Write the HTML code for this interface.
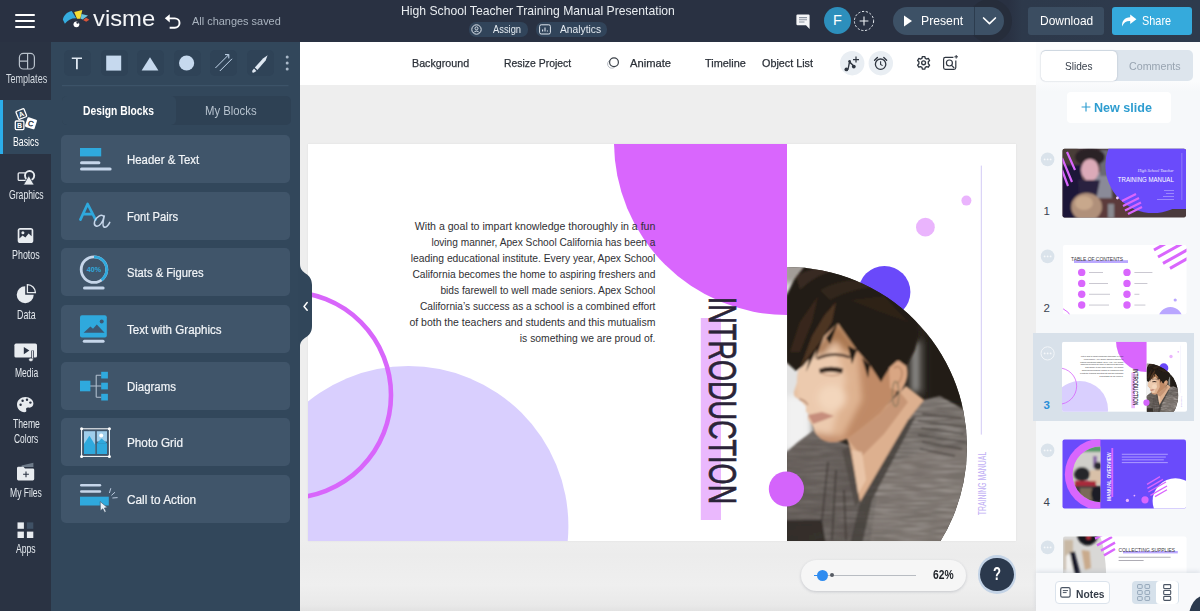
<!DOCTYPE html>
<html><head>
<meta charset="utf-8">
<title>Visme</title>
<style>
*{box-sizing:border-box;margin:0;padding:0}
html,body{width:1200px;height:611px;overflow:hidden;background:#eeeeee;font-family:"Liberation Sans",sans-serif;}
#app{position:relative;width:1200px;height:611px;overflow:hidden}
.a{position:absolute}
.x{position:absolute;white-space:nowrap;line-height:1;transform-origin:0 50%;display:inline-block}
.xr{position:absolute;white-space:nowrap;line-height:1;transform-origin:100% 50%;display:inline-block}
svg{position:absolute;overflow:visible}
/* top bar */
#top{position:absolute;left:0;top:0;width:1200px;height:41.5px;overflow:hidden;background:linear-gradient(90deg,#293142 0,#293142 1008px,#2d394b 1022px,#2e3b4d 1200px);color:#fff}
/* left icon rail */
#rail{position:absolute;left:0;top:41px;width:51px;height:570px;background:#2a3343}
#rail .x{color:#e4e9ee;font-size:13px}
/* panel */
#panel{position:absolute;left:51px;top:41px;width:249px;height:570px;background:#32475b}
.blk{position:absolute;left:9px;width:229px;height:48px;border-radius:5px;background:#40556a}
.blk .x{left:65.8px;top:19.2px;color:#f2f5f8;font-size:12px;-webkit-text-stroke:.2px #f2f5f8}
.sb{position:absolute;top:8px;width:27px;height:26px;border-radius:5px;background:#2f4357}
/* toolbar */
#tb{position:absolute;left:300px;top:41px;width:735.5px;height:44px;background:#fff;color:#2f3640}
#tb .x{top:15px;font-size:11px;color:#2b3038;-webkit-text-stroke:.25px #2b3038}
/* canvas */
#cv{position:absolute;left:300px;top:85px;width:735.5px;height:526px;background:linear-gradient(180deg,#eeeeee 0,#eeeeee 455px,#ececec 470px,#efefef 500px,#e9e9e9 520px,#e2e2e2 526px)}
#slide{position:absolute;left:308px;top:144px;width:708px;height:397px;background:#fff;overflow:hidden;box-shadow:0 0 2px rgba(0,0,0,.07)}
/* right */
#right{position:absolute;left:1035.5px;top:41px;width:164.5px;height:570px;background:linear-gradient(180deg,#fbfcfd 0,#fbfcfd 40px,#f6f8fa 50px,#f6f8fa 100%)}
</style>
</head>
<body>
<div id="app">
  <div id="cv"></div>
  <div id="slide"><svg style="left:0;top:0" width="708" height="397" viewBox="308 144 708 397">
<defs>
  <clipPath id="cpPhoto"><path d="M787 267 A180 180 0 0 1 787 627 Z"></path></clipPath>
  <clipPath id="cpFace"><path d="M798 371 L797 383 L794 392 Q793 397 799 399 L803 403 L806 406 L806 411 L809 414 L808 419 L813 426 Q815 437 826 441 Q838 444 850 437 L880 414 L896 394 L900 378 L890 368 L881 381 L870 365 L857 350 L838 323 L824 336 L816 350 L803 366 Z"></path></clipPath>
  <clipPath id="cpShirt"><path d="M780 458 L798 442 L813 431 L850 446 L860 502 L908 420 L924 400 L940 396 L972 414 V545 H780 Z"></path></clipPath>
  <filter id="heatherD" x="0" y="0" width="100%" height="100%"><feTurbulence type="fractalNoise" baseFrequency="0.035 0.55" numOctaves="2" seed="4"></feTurbulence><feColorMatrix type="matrix" values="0 0 0 0 0.18  0 0 0 0 0.16  0 0 0 0 0.14  1.6 0 0 0 -0.62"></feColorMatrix></filter>
  <filter id="heatherL" x="0" y="0" width="100%" height="100%"><feTurbulence type="fractalNoise" baseFrequency="0.03 0.5" numOctaves="2" seed="11"></feTurbulence><feColorMatrix type="matrix" values="0 0 0 0 0.66  0 0 0 0 0.62  0 0 0 0 0.59  1.4 0 0 0 -0.6"></feColorMatrix></filter>
  <clipPath id="cpPink"><rect x="308" y="144" width="479" height="397"></rect></clipPath>
  <filter id="bl1" x="-10%" y="-10%" width="120%" height="120%"><feGaussianBlur stdDeviation="1.3"></feGaussianBlur></filter>
  <filter id="bl3" x="-20%" y="-20%" width="140%" height="140%"><feGaussianBlur stdDeviation="3"></feGaussianBlur></filter>
  <linearGradient id="gSkin" x1="0" y1="0" x2="1" y2="0"><stop offset="0" stop-color="#e9c3a4"></stop><stop offset=".55" stop-color="#dcae8c"></stop><stop offset="1" stop-color="#c99572"></stop></linearGradient>
  <linearGradient id="gShirt" x1="0" y1="0" x2="1" y2="1"><stop offset="0" stop-color="#7a726d"></stop><stop offset=".6" stop-color="#6a6460"></stop><stop offset="1" stop-color="#5c5652"></stop></linearGradient>
  <g id="slideArt">
    <rect x="308" y="144" width="708" height="397" fill="#fff"></rect>
    <!-- lavender circle -->
    <circle cx="408.4" cy="526" r="160" fill="#d9cffe"></circle>
    <!-- pink ring -->
    <circle cx="288" cy="395" r="103" fill="none" stroke="#d866fb" stroke-width="4.6"></circle>
    <!-- big pink quarter -->
    <g clip-path="url(#cpPink)"><circle cx="787" cy="142" r="173" fill="#d966fd"></circle></g>
    <!-- small circles -->
    <circle cx="925.4" cy="227.2" r="9.4" fill="#eab4fd"></circle>
    <circle cx="966.4" cy="200.6" r="5" fill="#eab4fd"></circle>
    <circle cx="884.4" cy="292" r="26" fill="#6a49fa"></circle>
    <!-- line + vertical caption -->
    <rect x="980.8" y="165.6" width="1" height="269" fill="#d3caf6"></rect>
    <text transform="translate(985.6 515.2) rotate(-90)" font-family="Liberation Sans" font-size="10" fill="#bfaff4" textLength="63.4" lengthAdjust="spacingAndGlyphs">TRAINING MANUAL</text>
    <!-- intro -->
    <rect x="700.8" y="318" width="20.2" height="202" fill="#eab8fd"></rect>
    <text transform="translate(709.4 296.8) rotate(90)" font-family="Liberation Sans" font-size="39.6" fill="#2a2438" stroke="#2a2438" stroke-width="0.7" textLength="207.4" lengthAdjust="spacingAndGlyphs">INTRODUCTION</text>
    <!-- photo -->
    <g clip-path="url(#cpPhoto)">
      <rect x="787" y="260" width="185" height="285" fill="#2a251f"></rect>
      <g filter="url(#bl3)">
        <rect x="778" y="255" width="36" height="205" fill="#e2e2e2"></rect>
        <rect x="782" y="258" width="24" height="26" fill="#a39d98"></rect>
        <rect x="784" y="300" width="10" height="55" fill="#8f8c8a"></rect>
        <rect x="785" y="396" width="24" height="56" fill="#f1f1f1"></rect>
        <rect x="783" y="452" width="8" height="12" fill="#3a3430"></rect>
        <rect x="911" y="342" width="9" height="50" fill="#8e8d8a"></rect>
        <rect x="926" y="325" width="46" height="80" fill="#231e18"></rect>
      </g>
      <g filter="url(#bl1)">
        <!-- shirt -->
        <path d="M780 458 L798 442 L813 431 L850 446 L860 502 L908 420 L924 400 L940 396 L972 414 V545 H780 Z" fill="url(#gShirt)"></path>
        <path d="M880 470 Q930 440 972 450 V545 H870 Z" fill="#857c76" opacity=".55"></path>
        <g clip-path="url(#cpShirt)"><rect x="787" y="396" width="185" height="146" filter="url(#heatherL)"></rect><rect x="787" y="396" width="185" height="146" filter="url(#heatherD)"></rect></g>
        <path d="M780 458 L798 442 L813 431 L850 446 L860 502 L852 545 H780 Z" fill="#46403c" opacity=".38"></path>
        <path d="M780 520 H822 L826 545 H780 Z" fill="#2c2622" opacity=".85"></path>
        <path d="M860 502 L908 420 L916 416 L872 500 L862 545 H850 Z" fill="#3f3935" opacity=".75"></path>
        <path d="M850 446 L860 502 L855 506 L842 450 Z" fill="#4d4742" opacity=".7"></path>
        <g stroke="#39332f" stroke-width="1.7" opacity=".7" fill="none">
          <path d="M922 414 L962 418 M918 421 L966 427 M921 428 L964 434 M918 435 L966 442 M922 442 L962 449 M920 449 L955 456"></path>
          <path d="M836 470 L832 540 M828 462 L822 520 M844 490 L846 540"></path>
        </g>
        
        <!-- neck -->
        <path d="M846 436 L850 447 L860 502 L908 420 L924 400 L906 386 L880 412 Z" fill="#ddb08f"></path>
        <path d="M846 438 L878 416 L900 392 L908 402 L884 434 L862 456 Z" fill="#bb8868" opacity=".65"></path>
        <path d="M852 450 L858 494 L866 480 L862 452 Z" fill="#ecc9ad" opacity=".8"></path>
        <!-- face -->
        <path d="M798 371 L797 383 L794 392 Q793 397 799 399 L803 403 L806 406 L806 411 L809 414 L808 419 L813 426 Q815 437 826 441 Q838 444 850 437 L880 414 L896 394 L900 378 L890 368 L881 381 L870 365 L857 350 L838 323 L824 336 L816 350 L803 366 Z" fill="#dfb391"></path>
        <g clip-path="url(#cpFace)"><g filter="url(#bl3)">
          <path d="M790 360 L830 330 L846 380 L830 440 L800 430 Z" fill="#eccaae"></path>
          <ellipse cx="832" cy="398" rx="14" ry="13" fill="#f3d6bc"></ellipse>
          <path d="M858 350 L905 372 L900 400 L852 445 L838 446 L862 400 Z" fill="#c08a66"></path>
          <path d="M812 352 L838 322 L860 352 L846 352 L836 340 L822 356 Z" fill="#a8764f"></path>
          <path d="M812 432 L850 438 L838 450 L816 446 Z" fill="#c4906e"></path>
        </g></g>
        <path d="M808 415 L822 412 L834 416 L824 420 L813 424 Z" fill="#bf8272" opacity=".85"></path>
        <path d="M819 369 Q830 364.5 843 368.6 L842 373.4 Q830 370 820 373.4 Z" fill="#2e211a" opacity=".95"></path>
        <path d="M822 374 Q831 377 840 374.4" stroke="#b88468" stroke-width="1.2" fill="none" opacity=".8"></path>
        <path d="M817 358.6 Q834 351 850 357.4" stroke="#4a3528" stroke-width="2.8" fill="none" opacity=".8"></path>
        <path d="M799 399 Q805 400 808 405" stroke="#a87860" stroke-width="1.4" fill="none" opacity=".8"></path>
        <!-- ear -->
        <path d="M889 366 Q898 356 906 364 Q911 378 900 392 L890 388 Z" fill="#d9a683"></path>
        <path d="M894 368 Q900 364 902 372 Q902 380 897 384" stroke="#b07e5e" stroke-width="1.2" fill="none"></path>
        <ellipse cx="895.6" cy="394" rx="3.2" ry="12.6" fill="none" stroke="#8d7a5e" stroke-width="1.1"></ellipse>
        <!-- hair -->
        <path d="M786 362 L786 296 L794 280 L806 264 L830 258 L905 262 L914 300 L919 334 L915 350 L906 366 L898 360 L889 368 L881 382 L870 365 L857 350 L838 323 L824 336 L816 351 L803 366 L796 371 Z" fill="#231a12"></path>
        <path d="M838 323 L830 344 L826 338 Z M857 350 L852 364 L848 346 Z M870 365 L868 378 L862 358 Z M816 351 L806 372 L810 356 Z M824 336 L815 360 L818 344 Z" fill="#231a12"></path>
        <path d="M800 368 L812 336 L824 316 L836 302 L832 322 L820 342 Z" fill="#6a4830" opacity=".6"></path>
        <path d="M790 352 L800 322 L818 296 L812 322 L800 352 Z" fill="#46321f" opacity=".6"></path>
        <path d="M820 290 Q850 272 890 288 Q860 284 830 300 Z" fill="#3c2d20" opacity=".6"></path>
        <path d="M850 300 L884 296 L908 322 L880 312 Z" fill="#35281d" opacity=".6"></path>
        <path d="M796 276 Q820 262 850 268 Q820 270 800 290 Z" fill="#4a3c30" opacity=".55"></path>
      </g>
    </g>
    <!-- pink small circle -->
    <circle cx="786.4" cy="489" r="17.6" fill="#d464fb"></circle>
    <!-- body text -->
    <g font-family="Liberation Sans" font-size="10.6" fill="#303034" text-anchor="end">
      <text x="655.4" y="230" textLength="240.6" lengthAdjust="spacingAndGlyphs">With a goal to impart knowledge thoroughly in a fun</text>
      <text x="655.4" y="246" textLength="224" lengthAdjust="spacingAndGlyphs">loving manner, Apex School California has been a</text>
      <text x="655.4" y="262" textLength="244.6" lengthAdjust="spacingAndGlyphs">leading educational institute. Every year, Apex School</text>
      <text x="655.4" y="278" textLength="243" lengthAdjust="spacingAndGlyphs">California becomes the home to aspiring freshers and</text>
      <text x="655.4" y="294" textLength="215" lengthAdjust="spacingAndGlyphs">bids farewell to well made seniors. Apex School</text>
      <text x="655.4" y="310" textLength="235.4" lengthAdjust="spacingAndGlyphs">California’s success as a school is a combined effort</text>
      <text x="655.4" y="326" textLength="246" lengthAdjust="spacingAndGlyphs">of both the teachers and students and this mutualism</text>
      <text x="655.4" y="342" textLength="135.6" lengthAdjust="spacingAndGlyphs">is something we are proud of.</text>
    </g>
  </g>
</defs>
<use href="#slideArt"></use>
</svg>
</div>
  <div id="tb"><div class="a" style="left:-300px;top:-41px;width:1200px;height:100px">
<span class="x" style="left: 412.2px; top: 57.6px; transform: scaleX(0.9729);">Background</span>
<span class="x" style="left: 503.8px; top: 57.6px; transform: scaleX(0.9465);">Resize Project</span>
<span class="x" style="left: 629.8px; top: 57.6px; transform: scaleX(1.015);">Animate</span>
<span class="x" style="left: 704.8px; top: 57.6px; transform: scaleX(0.9902);">Timeline</span>
<span class="x" style="left: 762.4px; top: 57.6px; transform: scaleX(0.9808);">Object List</span>
<svg style="left:0;top:0" width="1200" height="100" viewBox="0 0 1200 100">
  <!-- animate icon -->
  <circle cx="611.8" cy="64" r="4.2" fill="none" stroke="#b7bcc4" stroke-width="1"></circle>
  <circle cx="614" cy="62.2" r="4.4" fill="#fff" stroke="#3a4048" stroke-width="1.2"></circle>
  <!-- music -->
  <circle cx="852.2" cy="63.2" r="12.2" fill="#e9eef3"></circle>
  <g fill="#2f3640" stroke="none">
    <circle cx="846.4" cy="69.4" r="1.9"></circle>
    <circle cx="853.8" cy="66.6" r="1.9"></circle>
    <circle cx="849.6" cy="61.2" r="1.3"></circle>
    <path d="M847.4 69.4 L848.9 61 L850.3 61.4 L852.2 63.4 L854.9 66.2 L853.8 67.2 L851.2 64.6 L849.9 63.4 L848.6 69.8 Z"></path>
    <path d="M855.4 56.6 H856.6 V59 H859 V60.2 H856.6 V62.6 H855.4 V60.2 H853 V59 H855.4 Z"></path>
  </g>
  <!-- alarm -->
  <circle cx="880.8" cy="63.2" r="12.2" fill="#e9eef3"></circle>
  <circle cx="880.6" cy="64.2" r="5.2" fill="none" stroke="#2f3640" stroke-width="1.3"></circle>
  <path d="M880.6 61.2 V64.4 L882.6 65.6" fill="none" stroke="#2f3640" stroke-width="1.1"></path>
  <path d="M874.6 60.2 L877.4 57.6 M886.6 60.2 L883.8 57.6" stroke="#2f3640" stroke-width="1.4" stroke-linecap="round"></path>
  <!-- gear -->
  <g transform="translate(923.6 62.8) scale(.92)">
    <path d="M-1.3 -6.8 H1.3 L1.8 -4.9 L3.3 -4.1 L5.1 -4.8 L6.5 -2.5 L5.1 -1.1 V1.1 L6.5 2.5 L5.1 4.8 L3.3 4.1 L1.8 4.9 L1.3 6.8 H-1.3 L-1.8 4.9 L-3.3 4.1 L-5.1 4.8 L-6.5 2.5 L-5.1 1.1 V-1.1 L-6.5 -2.5 L-5.1 -4.8 L-3.3 -4.1 L-1.8 -4.9 Z" fill="none" stroke="#2f3640" stroke-width="1.45" stroke-linejoin="round"></path>
    <circle r="2.1" fill="none" stroke="#2f3640" stroke-width="1.45"></circle>
  </g>
  <!-- image search -->
  <g fill="none" stroke="#2f3640" stroke-width="1.2">
    <path d="M953.4 57.4 H945.4 Q943.6 57.4 943.6 59.2 V67.6 Q943.6 69.4 945.4 69.4 H954 Q955.8 69.4 955.8 67.6 V60.4"></path>
    <circle cx="949.4" cy="63" r="3"></circle>
    <path d="M951.6 65.4 L954.2 68"></path>
    <path d="M956.2 55 V58.6 M954.4 56.8 H958" stroke-width="1"></path>
  </g>
</svg>
</div>
</div>
  <div id="right"><div class="a" style="left:-1035.5px;top:-41px;width:1200px;height:611px">
<!-- tabs -->
<div class="a" style="left:1040.8px;top:50px;width:152.6px;height:31.4px;border-radius:5px;background:#dde5ed"></div>
<div class="a" style="left:1041.4px;top:50.6px;width:76px;height:30.2px;border-radius:4.5px;background:#fff;box-shadow:0 0 1.5px rgba(60,80,110,.45)"></div>
<span class="x" style="left: 1065.4px; top: 60px; font-size: 11.6px; color: rgb(54, 62, 74); transform: scaleX(0.8688);">Slides</span>
<span class="x" style="left: 1128.6px; top: 60px; font-size: 11.6px; color: rgb(152, 164, 177); transform: scaleX(0.9214);">Comments</span>
<!-- new slide -->
<div class="a" style="left:1066.5px;top:92.4px;width:104.5px;height:31px;border-radius:4px;background:#fff"></div>
<svg style="left:1081px;top:102.4px" width="10" height="10" viewBox="0 0 10 10"><path d="M5 .6V9.4M.6 5H9.4" stroke="#2e9dd0" stroke-width="1.15"></path></svg>
<span class="x" style="left: 1094.2px; top: 101.2px; font-size: 13px; font-weight: bold; color: rgb(46, 157, 208); transform: scaleX(0.9667);">New slide</span>
<!-- selection -->
<div class="a" style="left:1032.8px;top:333px;width:161.4px;height:88px;background:#d8e1ea"></div>
<!-- numbers -->
<span class="x" style="left:1043.6px;top:206.4px;font-size:11.5px;color:#3a4350">1</span>
<span class="x" style="left:1043.6px;top:303.4px;font-size:11.5px;color:#3a4350">2</span>
<span class="x" style="left:1043.4px;top:399.8px;font-size:11.5px;color:#2b8fd8;font-weight:bold">3</span>
<span class="x" style="left:1043.6px;top:497.4px;font-size:11.5px;color:#3a4350">4</span>
<svg style="left:0;top:0" width="1200" height="611" viewBox="0 0 1200 611">
<defs>
  <clipPath id="t1"><rect x="1062.5" y="148.8" width="123.5" height="68.8" rx="2"></rect></clipPath>
  <clipPath id="t2"><rect x="1063" y="245" width="123.5" height="69.2" rx="2"></rect></clipPath>
  <clipPath id="t3"><rect x="1062" y="341.8" width="125" height="70" rx="2"></rect></clipPath>
  <clipPath id="t4"><rect x="1062.5" y="439.4" width="123.5" height="69" rx="2"></rect></clipPath>
  <clipPath id="t5"><rect x="1063" y="536.4" width="123.5" height="69" rx="2"></rect></clipPath>
  <clipPath id="t4in"><circle cx="1100.4" cy="474.4" r="27.8"></circle></clipPath>
  <clipPath id="t4h"><rect x="1060" y="436" width="40.4" height="76"></rect></clipPath>
  <filter id="tb1" x="-20%" y="-20%" width="140%" height="140%"><feGaussianBlur stdDeviation="1.1"></feGaussianBlur></filter>
</defs>
<!-- more buttons -->
<g>
  <circle cx="1047.6" cy="159.4" r="6.8" fill="#dae3eb"></circle><circle cx="1047.6" cy="256.4" r="6.8" fill="#dae3eb"></circle>
  <circle cx="1047.6" cy="353.4" r="6.6" fill="none" stroke="#f3f6f9" stroke-width="1"></circle>
  <circle cx="1047.6" cy="450.4" r="6.8" fill="#dae3eb"></circle><circle cx="1047.6" cy="547.4" r="6.8" fill="#dae3eb"></circle>
  <g fill="#f6f8fa">
    <circle cx="1044.6" cy="159.4" r=".9"></circle><circle cx="1047.6" cy="159.4" r=".9"></circle><circle cx="1050.6" cy="159.4" r=".9"></circle>
    <circle cx="1044.6" cy="256.4" r=".9"></circle><circle cx="1047.6" cy="256.4" r=".9"></circle><circle cx="1050.6" cy="256.4" r=".9"></circle>
    <circle cx="1044.6" cy="353.4" r=".9"></circle><circle cx="1047.6" cy="353.4" r=".9"></circle><circle cx="1050.6" cy="353.4" r=".9"></circle>
    <circle cx="1044.6" cy="450.4" r=".9"></circle><circle cx="1047.6" cy="450.4" r=".9"></circle><circle cx="1050.6" cy="450.4" r=".9"></circle>
    <circle cx="1044.6" cy="547.4" r=".9"></circle><circle cx="1047.6" cy="547.4" r=".9"></circle><circle cx="1050.6" cy="547.4" r=".9"></circle>
  </g>
</g>
<!-- thumb 1 -->
<g clip-path="url(#t1)">
  <rect x="1062" y="148" width="125" height="71" fill="#4a3a3c"></rect>
  <g filter="url(#tb1)">
    <rect x="1062" y="148" width="16" height="20" fill="#4a3c38"></rect>
    <rect x="1062" y="165" width="20" height="54" fill="#1b1538"></rect>
    <rect x="1088" y="172" width="24" height="30" fill="#8a8a98"></rect>
    <rect x="1100" y="150" width="12" height="26" fill="#6a6a72"></rect>
    <path d="M1098 198 H1130 V219 H1096 Z" fill="#5c3a3a"></path>
    <ellipse cx="1090" cy="157" rx="15" ry="9" fill="#2c2228"></ellipse>
    <ellipse cx="1090" cy="170" rx="9" ry="11" fill="#dcaab8"></ellipse>
    <path d="M1078 180 L1100 180 L1096 200 L1080 204 Z" fill="#2a2040"></path>
    <ellipse cx="1086.6" cy="207" rx="15.4" ry="14" fill="#b0907a"></ellipse>
    <ellipse cx="1084" cy="203" rx="9" ry="7" fill="#c8a88c"></ellipse>
    <rect x="1108" y="204" width="6" height="14" fill="#8a8a90"></rect>
  </g>
  <circle cx="1153" cy="165.4" r="47.6" fill="#6a4bfb"></circle>
  <rect x="1160" y="190" width="30" height="19" fill="#6a4bfb"></rect>
  <g stroke="#d966fd" stroke-width="2.2">
    <path d="M1062 158 L1072 182 M1062 170 L1068 186 M1067 152 L1075 170"></path>
    <path d="M1122 201 L1136 194 M1123 206 L1139 198 M1125 210.4 L1141 202.4 M1128 214 L1142 207"></path>
  </g>
  <circle cx="1117.4" cy="198" r="1.4" fill="#f0c8ff"></circle>
  <text x="1117.8" y="181.8" font-family="Liberation Sans" font-size="6.6" fill="#fff" textLength="56" lengthAdjust="spacingAndGlyphs">TRAINING MANUAL</text>
  <text x="1137.8" y="172" font-family="Liberation Serif" font-style="italic" font-size="4.6" fill="#efeaff" textLength="36" lengthAdjust="spacingAndGlyphs">High School Teacher</text>
  <g fill="#b9aaff" opacity=".8"><rect x="1164" y="190.2" width="10" height=".8"></rect><rect x="1166" y="193.2" width="8" height=".8"></rect><rect x="1163" y="196.2" width="11" height=".8"></rect><rect x="1157" y="199.2" width="17" height=".8"></rect></g>
  <rect x="1181.6" y="153" width=".6" height="47" fill="#a896ff"></rect>
</g>
<!-- thumb 2 -->
<g clip-path="url(#t2)">
  <rect x="1062" y="244" width="126" height="72" fill="#fff"></rect>
  <rect x="1074" y="260.2" width="54" height="2.8" fill="#bba8ff"></rect>
  <text x="1071" y="261.4" font-family="Liberation Sans" font-size="5.8" fill="#3c3a44" textLength="52" lengthAdjust="spacingAndGlyphs">TABLE OF CONTENTS</text>
  <g stroke="#d966fd" stroke-width="3">
    <path d="M1154 250 L1172 240 M1158 257 L1186 241.4 M1163 263.4 L1190 248.4 M1170 268.4 L1192 256"></path>
  </g>
  <g fill="#d966fd">
    <circle cx="1081.7" cy="272.4" r="3.7"></circle><circle cx="1081.7" cy="283.4" r="3.7"></circle><circle cx="1081.7" cy="294.2" r="3.7"></circle><circle cx="1081.7" cy="305" r="3.7"></circle>
    <circle cx="1127" cy="272.4" r="3.7"></circle><circle cx="1127" cy="283.4" r="3.7"></circle><circle cx="1127" cy="294.2" r="3.7"></circle><circle cx="1127" cy="305" r="3.7"></circle>
  </g>
  <g fill="#c4c2cc">
    <rect x="1089" y="272" width="14" height=".9"></rect><rect x="1089" y="283" width="19" height=".9"></rect><rect x="1089" y="293.8" width="21" height=".9"></rect><rect x="1089" y="304.6" width="20" height=".9"></rect>
    <rect x="1134.4" y="272" width="18" height=".9"></rect><rect x="1134.4" y="283" width="13" height=".9"></rect><rect x="1134.4" y="293.8" width="5" height=".9"></rect><rect x="1134.4" y="304.6" width="11" height=".9"></rect>
  </g>
  <circle cx="1170.4" cy="319" r="12" fill="#b9a6ff"></circle>
  <circle cx="1175.2" cy="300" r="1.6" fill="#b9a6ff"></circle>
  <circle cx="1058" cy="322" r="14" fill="none" stroke="#d966fd" stroke-width="1"></circle>
</g>
<!-- thumb 3 = slide -->
<g clip-path="url(#t3)"><g transform="translate(1062 341.8) scale(.17655) translate(-308 -144)"><use href="#slideArt"></use></g></g>
<!-- thumb 4 -->
<g clip-path="url(#t4)">
  <rect x="1062" y="439" width="125" height="70" fill="#6a4bfb"></rect>
  <g clip-path="url(#t4h)">
    <circle cx="1100.4" cy="474.4" r="35.6" fill="#d966fd"></circle>
    <circle cx="1100.4" cy="474.4" r="27.8" fill="#c9c7c0"></circle>
    <g clip-path="url(#t4in)"><g filter="url(#tb1)">
      <rect x="1078" y="446" width="24" height="6" fill="#5a9a6c"></rect>
      <rect x="1074" y="452" width="28" height="22" fill="#d0cfca"></rect>
      <rect x="1093" y="456" width="4" height="12" fill="#8a6aa8"></rect>
      <ellipse cx="1082" cy="474" rx="8" ry="7" fill="#25252c"></ellipse>
      <ellipse cx="1098" cy="466" rx="4" ry="4" fill="#2a2a30"></ellipse>
      <rect x="1090" y="470" width="12" height="14" fill="#d8c0a8"></rect>
      <rect x="1075" y="481" width="21" height="5" fill="#a82a3a"></rect>
      <rect x="1072" y="486" width="30" height="18" fill="#3a3a3e"></rect>
      <rect x="1080" y="488" width="12" height="12" fill="#7a6a58"></rect>
      <ellipse cx="1097" cy="494" rx="6" ry="8" fill="#1f1f26"></ellipse>
    </g></g>
  </g>
  <rect x="1111.4" y="448" width="1.8" height="49" fill="#d966fd"></rect>
  <text transform="translate(1111 501) rotate(-90)" font-family="Liberation Sans" font-size="6" font-weight="bold" fill="#f4f0ff" textLength="48.6" lengthAdjust="spacingAndGlyphs">MANUAL OVERVIEW</text>
  <g fill="#b3a3ff"><rect x="1121.8" y="453.8" width="46" height=".9"></rect><rect x="1121.8" y="456.6" width="44" height=".9"></rect><rect x="1121.8" y="459.4" width="42" height=".9"></rect><rect x="1121.8" y="462.2" width="46" height=".9"></rect></g>
  <circle cx="1175.4" cy="501" r="22.8" fill="#fff"></circle>
  <g stroke="#d966fd" stroke-width="1.3"><path d="M1147 484.4 L1160 476.6 M1147.4 488.4 L1163 479.4 M1148.4 492 L1166 482 M1150.4 495.4 L1167 486 M1155 496.6 L1167 489.8"></path></g>
  <circle cx="1145" cy="499.8" r="3.6" fill="#d966fd"></circle>
  <circle cx="1127.4" cy="500.4" r="1.6" fill="#eab4fd"></circle>
  <circle cx="1134.4" cy="495.6" r=".9" fill="#eab4fd"></circle>
</g>
<!-- thumb 5 -->
<g clip-path="url(#t5)">
  <rect x="1062" y="536" width="126" height="72" fill="#fff"></rect>
  <path d="M1063 536 H1100 Q1108 556 1106 606 H1063 Z" fill="#d9d8d6"></path>
  <g filter="url(#tb1)">
    <rect x="1064" y="540" width="9" height="30" fill="#c8b8a4"></rect>
    <circle cx="1087.6" cy="535" r="10.4" fill="#17161a"></circle>
    <circle cx="1088.6" cy="537.4" r="2.2" fill="#c03040"></circle>
    <path d="M1069.6 552.4 L1074.4 551.6 L1080.4 574 H1074.4 Z" fill="#191826"></path>
    <path d="M1081.6 550 L1089.6 551 L1091 568 L1085 570 Z" fill="#c9aa8c"></path>
    <path d="M1066 556 L1070 553 L1074 574 H1066 Z" fill="#f1f0ee"></path>
  </g>
  <g stroke="#d966fd" stroke-width="2.4"><path d="M1095 538.6 L1106 533 M1097 545.4 L1112 537 M1101 550.6 L1115 542.6 M1104 555.4 L1115 549"></path></g>
  <rect x="1123" y="551" width="54.8" height="2.4" fill="#bba8ff"></rect>
  <text x="1118.5" y="552.4" font-family="Liberation Sans" font-size="6" fill="#3c3a44" textLength="56.6" lengthAdjust="spacingAndGlyphs">COLLECTING SUPPLIES</text>
  <g fill="#9a98a2"><rect x="1118.6" y="556.8" width="52" height=".8"></rect><rect x="1118.6" y="560" width="25" height=".8"></rect></g>
</g>
</svg>
<!-- bottom bar -->
<div class="a" style="left:1035.5px;top:573px;width:164.5px;height:38px;background:#f8f9fb;box-shadow:0 -2px 4px rgba(120,140,165,.18)"></div>
<div class="a" style="left:1055px;top:580.6px;width:54.6px;height:23.8px;border-radius:4px;background:#fff;border:1px solid #dbe3ec"></div>
<svg style="left:1060px;top:587px" width="11" height="11" viewBox="0 0 11 11"><rect x=".7" y=".7" width="9.4" height="9.4" rx="1.6" fill="#fff" stroke="#4a5463" stroke-width="1.2"></rect><path d="M2.8 3.6H8M2.8 5.6H6.6" stroke="#4a5463" stroke-width="1"></path></svg>
<span class="x" style="left: 1075.8px; top: 587.6px; font-size: 11.6px; color: rgb(54, 62, 74); font-weight: bold; transform: scaleX(0.8875);">Notes</span>
<div class="a" style="left:1131.5px;top:580.6px;width:47.2px;height:23.8px;border-radius:4px;background:#d6e1eb"></div>
<div class="a" style="left:1156px;top:581.4px;width:22px;height:22.2px;border-radius:3.5px;background:#fff"></div>
<svg style="left:1136.6px;top:584.2px" width="14" height="17" viewBox="0 0 14 17"><g fill="none" stroke="#93a6b9" stroke-width="1"><rect x=".6" y=".6" width="4.6" height="3.8" rx=".6"></rect><rect x="8" y=".6" width="4.6" height="3.8" rx=".6"></rect><rect x=".6" y="6.6" width="4.6" height="3.8" rx=".6"></rect><rect x="8" y="6.6" width="4.6" height="3.8" rx=".6"></rect><rect x=".6" y="12.6" width="4.6" height="3.8" rx=".6"></rect><rect x="8" y="12.6" width="4.6" height="3.8" rx=".6"></rect></g></svg>
<svg style="left:1162.8px;top:584.2px" width="9" height="17" viewBox="0 0 9 17"><g fill="none" stroke="#4a5463" stroke-width="1.1"><rect x=".7" y=".6" width="7" height="4" rx=".8"></rect><rect x=".7" y="6.5" width="7" height="4" rx=".8"></rect><rect x=".7" y="12.4" width="7" height="4" rx=".8"></rect></g></svg>
<svg style="left:1186px;top:594px" width="14" height="17" viewBox="0 0 14 17"><path d="M14 2.5 Q6.5 6 3.5 17 H14 Z" fill="#2c3a4e"></path></svg>
</div>
</div>
  <div id="rail"><div class="a" style="left:0;top:-41px;width:52px;height:611px">
<div class="a" style="left:0;top:100px;width:52px;height:53.5px;background:#32475b"></div>
<div class="a" style="left:0;top:100px;width:3.2px;height:53.5px;background:#2badea"></div>
<svg style="left:0;top:0" width="52" height="611" viewBox="0 0 52 611">
  <!-- templates -->
  <g fill="none" stroke="#b9c2cc" stroke-width="1.2">
    <rect x="19.4" y="53.4" width="15" height="15.6" rx="4"></rect>
    <path d="M27.6 53.4V69 M19.4 61.2H27.6"></path>
  </g>
  <!-- basics -->
  <g>
    <rect x="-4.3" y="-4.3" width="8.6" height="8.6" rx="1" transform="translate(21.3 114) rotate(-22)" fill="#32475b" stroke="#fff" stroke-width="1.3"></rect>
    <rect x="15.3" y="121" width="8.6" height="8.6" rx="1" fill="#32475b" stroke="#fff" stroke-width="1.3"></rect>
    <rect x="-5" y="-5" width="10" height="10" rx="1.2" transform="translate(31 123.3) rotate(18)" fill="#fff"></rect>
    <text x="21.3" y="116.6" font-size="7.2" font-weight="bold" fill="#fff" text-anchor="middle" font-family="Liberation Sans" transform="rotate(-22 21.3 114)">A</text>
    <text x="19.6" y="128" font-size="7" font-weight="bold" fill="#fff" text-anchor="middle" font-family="Liberation Sans">B</text>
    <text x="31" y="126.2" font-size="8" font-weight="bold" fill="#2a3343" text-anchor="middle" font-family="Liberation Sans" transform="rotate(18 31 123.3)">C</text>
  </g>
  <!-- graphics -->
  <g>
    <rect x="18.2" y="172.8" width="10.8" height="7.6" rx="1" fill="none" stroke="#e8ecf0" stroke-width="1.3"></rect>
    <circle cx="29.6" cy="175.6" r="4.6" fill="#2a3343" stroke="#e8ecf0" stroke-width="1.9"></circle>
    <path d="M28.8 175.6 L34.2 185 H23.4 Z" fill="#e8ecf0" stroke="#2a3343" stroke-width=".8"></path>
  </g>
  <!-- photos -->
  <g>
    <rect x="17.7" y="228" width="15.6" height="15" rx="2.6" fill="#e8ecf0"></rect>
    <path d="M19.4 229.8 H31.6 V236.2 L28.6 233.6 L25.4 237.4 L22.6 235.4 L19.4 238.4 Z" fill="#2a3343"></path>
    <circle cx="22.9" cy="232.8" r="1.5" fill="#e8ecf0"></circle>
  </g>
  <!-- data -->
  <g>
    <path d="M25.2 294.8 V286.3 A8.5 8.5 0 1 0 33.7 294.8 Z" fill="#e8ecf0"></path>
    <path d="M27.4 292.6 V284.6 A8 8 0 0 1 35.4 292.6 Z" fill="#2a3343" stroke="#e8ecf0" stroke-width="1.3"></path>
  </g>
  <!-- media -->
  <g>
    <rect x="14.4" y="343.6" width="22.6" height="14" rx="1.6" fill="#e8ecf0"></rect>
    <path d="M23.8 347 L29.4 350.6 L23.8 354.2 Z" fill="#2a3343"></path>
    <path d="M32.6 350.5 V359.4" stroke="#2a3343" stroke-width="2.6"></path>
    <path d="M32.6 350.8 V359.6" stroke="#e8ecf0" stroke-width="1.1"></path>
    <ellipse cx="30.9" cy="359.8" rx="2.2" ry="1.7" fill="#e8ecf0" stroke="#2a3343" stroke-width=".5"></ellipse>
  </g>
  <!-- theme colors -->
  <g>
    <path d="M25.4 397 C30 397 33.4 400 33.4 403.6 C33.4 406.8 31 408 28.6 407.6 C26.6 407.2 25.6 408.4 26.2 410 C26.8 411.6 25.8 412.2 24.4 412.2 C20.2 412.2 17 408.8 17 404.6 C17 400.2 20.8 397 25.4 397 Z" fill="#e8ecf0"></path>
    <circle cx="20.6" cy="404.8" r="1.2" fill="#2a3343"></circle>
    <circle cx="22.6" cy="400.8" r="1.2" fill="#2a3343"></circle>
    <circle cx="27" cy="399.8" r="1.2" fill="#2a3343"></circle>
    <circle cx="30.4" cy="402.6" r="1.2" fill="#2a3343"></circle>
  </g>
  <!-- my files -->
  <g>
    <path d="M21.6 465.4 L33.4 462.8 V467 H21.6 Z" fill="#6d7a89"></path>
    <path d="M17 468.2 Q17 466.8 18.4 466.8 H23.4 L25 468.4 H32.8 Q34.2 468.4 34.2 469.8 V479 Q34.2 480.4 32.8 480.4 H18.4 Q17 480.4 17 479 Z" fill="#e8ecf0"></path>
    <path d="M26 471.4V477.2 M23.1 474.3H28.9" stroke="#2a3343" stroke-width="1.1"></path>
  </g>
  <!-- apps -->
  <g>
    <rect x="17.5" y="522.4" width="6.4" height="6.4" fill="#e8ecf0"></rect>
    <rect x="26.9" y="522.4" width="6.4" height="6.4" fill="#3f5165"></rect>
    <rect x="17.5" y="531.6" width="6.4" height="6.4" fill="#e8ecf0"></rect>
    <rect x="26.9" y="531.6" width="6.4" height="6.4" fill="#e8ecf0"></rect>
  </g>
</svg>
<span class="x" style="left: 6px; top: 72.1px; color: rgb(213, 219, 226); transform: scaleX(0.6949);">Templates</span>
<span class="x" style="left: 13.3px; top: 135.3px; color: rgb(255, 255, 255); transform: scaleX(0.6737);">Basics</span>
<span class="x" style="left: 8.8px; top: 188.3px; transform: scaleX(0.6654);">Graphics</span>
<span class="x" style="left: 12.4px; top: 248.3px; transform: scaleX(0.685);">Photos</span>
<span class="x" style="left: 16.8px; top: 307.5px; transform: scaleX(0.6815);">Data</span>
<span class="x" style="left: 14.6px; top: 365.5px; transform: scaleX(0.6571);">Media</span>
<span class="x" style="left: 12.8px; top: 417.3px; transform: scaleX(0.665);">Theme</span>
<span class="x" style="left: 13.8px; top: 431.7px; transform: scaleX(0.6474);">Colors</span>
<span class="x" style="left: 10.3px; top: 485.5px; transform: scaleX(0.6583);">My Files</span>
<span class="x" style="left: 16px; top: 542.2px; transform: scaleX(0.66);">Apps</span>
</div>
</div>
  <div id="panel"><div class="a" style="left:-51px;top:-41px;width:300px;height:611px">
<!-- shape buttons -->
<div class="sb" style="left:64px;top:50px"></div>
<div class="sb" style="left:100.5px;top:50px"></div>
<div class="sb" style="left:137px;top:50px"></div>
<div class="sb" style="left:173.5px;top:50px"></div>
<div class="sb" style="left:210px;top:50px"></div>
<div class="sb" style="left:246.5px;top:50px"></div>
<svg style="left:0;top:0" width="300" height="611" viewBox="0 0 300 611">
  <g fill="#c6d9ee">
    <path d="M71.8 57.4 H82 V59.1 H77.8 V69.2 H76 V59.1 H71.8 Z" fill="#dfe8f2"></path>
    <rect x="106.2" y="55.6" width="15" height="15"></rect>
    <path d="M150 57.2 L158.4 70.4 H141.6 Z"></path>
    <circle cx="186.6" cy="63" r="7.6"></circle>
    <circle cx="287.2" cy="57" r="1.5" fill="#aab9c9"></circle><circle cx="287.2" cy="63" r="1.5" fill="#aab9c9"></circle><circle cx="287.2" cy="69" r="1.5" fill="#aab9c9"></circle>
  </g>
  <g stroke="#c6d9ee" stroke-width="1" fill="none">
    <path d="M215.4 68 L228.6 54.8 M225 54.6 H228.8 V58.4"></path>
    <path d="M219.8 71 L232 58.8"></path>
  </g>
  <path d="M254.8 67.6 L263 58.6 L267.6 55.2 L265.6 60.4 L257.4 70 Z" fill="#dfe8f2"></path>
  <path d="M254 68.6 L256.4 71 L254 72.6 Q251.6 73.2 252.4 70.6 Z" fill="#dfe8f2"></path>
  <!-- separator -->
  <rect x="62" y="85.2" width="226.5" height="1" fill="#40566b"></rect>
</svg>
<!-- tabs -->
<div class="a" style="left:62px;top:96px;width:228.5px;height:28.5px;border-radius:5px;background:#2e4154"></div>
<div class="a" style="left:62px;top:96px;width:114px;height:28.5px;border-radius:5px;background:#32475b"></div>
<span class="x" style="left: 83.4px; top: 104.8px; font-size: 12.2px; color: rgb(255, 255, 255); font-weight: bold; transform: scaleX(0.8452);">Design Blocks</span>
<span class="x" style="left: 205.4px; top: 104.8px; font-size: 12.2px; color: rgb(181, 193, 205); transform: scaleX(0.9286);">My Blocks</span>
<!-- blocks -->
<div class="blk" style="left:61px;top:135px"><span class="x" style="transform: scaleX(0.9526);">Header &amp; Text</span></div>
<div class="blk" style="left:61px;top:191.7px"><span class="x" style="transform: scaleX(0.9345);">Font Pairs</span></div>
<div class="blk" style="left:61px;top:248.3px"><span class="x" style="transform: scaleX(0.9341);">Stats &amp; Figures</span></div>
<div class="blk" style="left:61px;top:305px"><span class="x" style="transform: scaleX(0.9653);">Text with Graphics</span></div>
<div class="blk" style="left:61px;top:361.7px"><span class="x" style="transform: scaleX(0.9529);">Diagrams</span></div>
<div class="blk" style="left:61px;top:418.3px"><span class="x" style="transform: scaleX(0.9789);">Photo Grid</span></div>
<div class="blk" style="left:61px;top:475px"><span class="x" style="transform: scaleX(0.9857);">Call to Action</span></div>
<svg style="left:0;top:0" width="300" height="611" viewBox="0 0 300 611">
  <!-- header & text -->
  <rect x="80" y="148" width="21.2" height="8.4" fill="#2fa9dd"></rect>
  <rect x="80" y="161.2" width="20.4" height="3" rx="1.5" fill="#c6d6ea"></rect>
  <rect x="80" y="167.6" width="31.6" height="3" rx="1.5" fill="#c6d6ea"></rect>
  <!-- font pairs -->
  <path d="M80.4 219.6 L87.6 204 L95.6 219.6 M83.4 214.2 H92.4" fill="none" stroke="#2fa9dd" stroke-width="2.7" stroke-linejoin="round" stroke-linecap="round"></path>
  <path d="M103.8 216.6 C101.6 213.6 96.2 216.6 94.6 221.6 C93.4 226 97.4 228.4 101 223.6 C102.6 221.4 103.8 218.4 104.4 215.4 C103.4 219.6 102 224.6 103.6 226.6 C105.6 228.6 108.4 225.4 109.8 222.4" fill="none" stroke="#c6d6ea" stroke-width="1.5" stroke-linecap="round"></path>
  <!-- stats -->
  <circle cx="94" cy="269.6" r="12.8" fill="none" stroke="#c6d6ea" stroke-width="2.8"></circle>
  <path d="M94 256.8 A12.8 12.8 0 0 1 101.5 280" fill="none" stroke="#2fa9dd" stroke-width="2.8"></path>
  <text x="94" y="272.3" font-size="7.2" font-weight="bold" fill="#2fa9dd" text-anchor="middle" font-family="Liberation Sans">40%</text>
  <rect x="83" y="286.4" width="21.6" height="3" rx="1.5" fill="#c6d6ea"></rect>
  <!-- text with graphics -->
  <rect x="80" y="315.3" width="26.8" height="22.3" rx="2" fill="#2fa9dd"></rect>
  <path d="M83.6 332.8 L90.4 326.6 L93 328.8 L96.8 324.6 L104.6 332.8 Z" fill="#3d5873"></path>
  <circle cx="101.7" cy="321.6" r="2" fill="#3d5873"></circle>
  <rect x="82.8" y="339.8" width="21.8" height="3" rx="1.5" fill="#c6d6ea"></rect>
  <!-- diagrams -->
  <path d="M90 386 H101.4 M96.2 375.2 V397.2 M96.2 375.2 H101.4 M96.2 397.2 H101.4" fill="none" stroke="#aebdcd" stroke-width="1.1"></path>
  <rect x="80" y="380.7" width="10.4" height="10.6" fill="#2fa9dd"></rect>
  <rect x="101.2" y="371.8" width="6.7" height="6.7" fill="#2fa9dd"></rect>
  <rect x="101.2" y="382.7" width="6.7" height="6.7" fill="#2fa9dd"></rect>
  <rect x="101.2" y="393.8" width="6.7" height="6.7" fill="#2fa9dd"></rect>
  <!-- photo grid -->
  <rect x="81.6" y="428.8" width="27.8" height="27.6" fill="none" stroke="#fff" stroke-width="1"></rect>
  <rect x="84" y="431.2" width="11.2" height="22.8" fill="#9fcdea"></rect>
  <path d="M84 454 V444 L89.4 435.8 L95.2 445 V454 Z" fill="#2fa9dd"></path>
  <rect x="96.8" y="431.2" width="10.2" height="10.4" fill="#9fcdea"></rect>
  <circle cx="101.2" cy="435.4" r="2" fill="#fff"></circle>
  <rect x="96.8" y="443.2" width="10.2" height="10.8" fill="#2fa9dd"></rect>
  <path d="M96.8 443.2 L101.6 438.6 L107 443.2 Z" fill="#2fa9dd"></path>
  <g fill="#fff"><circle cx="81.6" cy="428.8" r="1.5"></circle><circle cx="109.4" cy="428.8" r="1.5"></circle><circle cx="81.6" cy="456.4" r="1.5"></circle><circle cx="109.4" cy="456.4" r="1.5"></circle></g>
  <!-- call to action -->
  <rect x="80" y="484" width="21.2" height="2.6" rx="1.3" fill="#c6d6ea"></rect>
  <rect x="80" y="490.2" width="21.2" height="2.6" rx="1.3" fill="#c6d6ea"></rect>
  <rect x="80" y="496.7" width="28.8" height="8.8" fill="#2fa9dd"></rect>
  <path d="M100.2 501.6 L107.4 507.6 L104.4 508 L106.2 511.6 L104.6 512.4 L102.8 508.8 L100.4 510.8 Z" fill="#e8eef5" stroke="#34495e" stroke-width=".6"></path>
  <path d="M109.4 493 L110.8 488.2 M111.4 495.4 L115 492.2 M112.4 498 L117.6 497.6" stroke="#c6d6ea" stroke-width=".9" fill="none"></path>
</svg>
</div>
</div>
  <div id="top"><!-- hamburger -->
<div class="a" style="left:15px;top:13.6px;width:20px;height:2.6px;background:#fff;border-radius:1px"></div>
<div class="a" style="left:15px;top:19.8px;width:20px;height:2.6px;background:#fff;border-radius:1px"></div>
<div class="a" style="left:15px;top:25.8px;width:20px;height:2.6px;background:#fff;border-radius:1px"></div>
<!-- logo mark -->
<svg style="left:0;top:0" width="100" height="40" viewBox="0 0 100 40">
  <path d="M62.9 19.7 C63.4 15.6 67 12 71.7 11 L76.2 18.2 C71.5 18 67.6 20 64.9 23.7 Z" fill="#35ade0"></path>
  <path d="M74.2 12.1 L82.3 10 L80.4 18.8 L77 18.8 Z" fill="#f3dd35"></path>
  <path d="M81.5 14 L88 15.5 L82.6 19.5 L80.7 18.7 Z" fill="#6dc3dc"></path>
  <path d="M86.2 17.8 L89.4 19.7 L86.2 21.8 L83 19.9 Z" fill="#d9553a"></path>
  <circle cx="76.4" cy="24.3" r="2.9" fill="#fff"></circle>
  <circle cx="77.6" cy="22.6" r="1.2" fill="#293142"></circle>
</svg>
<span class="x" style="left: 92.5px; top: 8.7px; font-size: 21.5px; color: rgb(244, 246, 248); transform: scaleX(1.1071);">visme</span>
<!-- undo -->
<svg style="left:163.5px;top:12.6px" width="18.5" height="17.5" viewBox="0 0 18 17">
  <path d="M3 5.2 H10.5 A4.6 4.6 0 0 1 10.5 14.4 H5.5" fill="none" stroke="#fff" stroke-width="1.9"></path>
  <path d="M0.8 5.2 L5.6 1.2 V9.2 Z" fill="#fff"></path>
</svg>
<span class="x" style="left: 191.5px; top: 16px; font-size: 11px; color: rgb(169, 179, 191); transform: scaleX(0.9944);">All changes saved</span>
<!-- title -->
<span class="x" style="left: 400.5px; top: 4.8px; font-size: 12.8px; color: rgb(233, 237, 241); transform: scaleX(0.9514);">High School Teacher Training Manual Presentation</span>
<!-- assign -->
<div class="a" style="left:469px;top:22.4px;width:59px;height:14.2px;border-radius:7px;background:#31445a"></div>
<svg style="left:471px;top:24px" width="11" height="11" viewBox="0 0 11 11">
  <circle cx="5.5" cy="5.5" r="4.7" fill="none" stroke="#dfe6ee" stroke-width="1"></circle>
  <circle cx="5.5" cy="4.3" r="1.5" fill="none" stroke="#dfe6ee" stroke-width=".9"></circle>
  <path d="M2.8 8.6 C3.4 6.6 7.6 6.6 8.2 8.6" fill="none" stroke="#dfe6ee" stroke-width=".9"></path>
</svg>
<span class="x" style="left: 493px; top: 24px; font-size: 10.5px; color: rgb(228, 234, 240); transform: scaleX(0.8906);">Assign</span>
<div class="a" style="left:536px;top:22.4px;width:71px;height:14.2px;border-radius:7px;background:#31445a"></div>
<svg style="left:539px;top:24px" width="12" height="11" viewBox="0 0 12 11">
  <rect x=".6" y=".8" width="10.8" height="9.2" rx="1.6" fill="none" stroke="#dfe6ee" stroke-width="1"></rect>
  <path d="M3.6 7.6V5.4 M6 7.6V3.4 M8.4 7.6V6.4" stroke="#dfe6ee" stroke-width="1.1" fill="none"></path>
</svg>
<span class="x" style="left: 560px; top: 24px; font-size: 10.5px; color: rgb(228, 234, 240); transform: scaleX(0.9762);">Analytics</span>
<!-- comment icon -->
<svg style="left:796px;top:14px" width="14" height="16" viewBox="0 0 14 16">
  <path d="M1.6 0.4 H12.4 Q13.6 0.4 13.6 1.6 V15 L10 11.2 H1.6 Q0.4 11.2 0.4 10 V1.6 Q0.4 0.4 1.6 0.4 Z" fill="#f4f5f7"></path>
  <path d="M3 3.6H11 M3 5.8H11 M3 8H8.5" stroke="#8a93a0" stroke-width="1.1"></path>
</svg>
<!-- avatar -->
<div class="a" style="left:824px;top:7px;width:27px;height:27px;border-radius:14px;background:#2d8fbc"></div>
<span class="x" style="left:833px;top:13px;font-size:14.5px;color:#fff">F</span>
<svg style="left:853px;top:10px" width="22" height="22" viewBox="0 0 22 22">
  <circle cx="11" cy="11" r="9.6" fill="none" stroke="#e6ebf0" stroke-width="1" stroke-dasharray="2.2 1.7"></circle>
  <path d="M11 6.6V15.4M6.6 11H15.4" stroke="#f0f3f6" stroke-width="1.1"></path>
</svg>
<!-- present -->
<div class="a" style="left:968px;top:-1px;width:44px;height:44px;border-radius:22px;background:#262d3b"></div>
<div class="a" style="left:893px;top:7px;width:111px;height:28px;border-radius:14px;background:#3d5166"></div>
<div class="a" style="left:973.5px;top:7px;width:1px;height:28px;background:#2c3c4e"></div>
<svg style="left:903px;top:15px" width="10" height="12" viewBox="0 0 10 12"><path d="M1 .6L9 6 1 11.4Z" fill="#fff"></path></svg>
<span class="x" style="left: 920.5px; top: 15.2px; font-size: 12.8px; color: rgb(255, 255, 255); transform: scaleX(0.9545);">Present</span>
<svg style="left:982px;top:16px" width="15" height="10" viewBox="0 0 15 10"><path d="M1.6 2L7.5 7.6 13.4 2" fill="none" stroke="#fff" stroke-width="1.7" stroke-linecap="round" stroke-linejoin="round"></path></svg>
<!-- download -->
<div class="a" style="left:1028px;top:7px;width:76px;height:28px;border-radius:3px;background:#3b4d61"></div>
<span class="x" style="left: 1039.5px; top: 15.4px; font-size: 12.2px; color: rgb(255, 255, 255); transform: scaleX(0.9815);">Download</span>
<!-- share -->
<div class="a" style="left:1112px;top:7px;width:80px;height:28px;border-radius:3px;background:#35aadc"></div>
<svg style="left:1121px;top:14px" width="16" height="13" viewBox="0 0 16 13">
  <path d="M9.2 0.4 L15.4 5.2 9.2 10 V7 C5.4 6.8 2.6 8.6 1.2 12.4 C0.6 7 3.6 3.4 9.2 3.2 Z" fill="#fff"></path>
</svg>
<span class="x" style="left: 1142px; top: 15.4px; font-size: 12.2px; color: rgb(255, 255, 255); transform: scaleX(0.8939);">Share</span>
</div>
  <!-- collapse handle -->
<svg style="left:298px;top:260px" width="16" height="90" viewBox="0 0 16 90">
  <path d="M0 0 H2 V4 C2 15 14 12 14 25 V66 C14 79 2 76 2 87 V90 H0 Z" fill="#31465a"></path>
  <path d="M9.2 42.6 L6 46.4 L9.2 50.2" fill="none" stroke="#fff" stroke-width="1.5" stroke-linecap="round" stroke-linejoin="round"></path>
</svg>
<!-- zoom pill -->
<div class="a" style="left:800.6px;top:559.6px;width:165.4px;height:31px;border-radius:16px;background:#f6f6f6;box-shadow:0 1px 3px rgba(60,70,90,.22)"></div>
<div class="a" style="left:814px;top:574.8px;width:102px;height:1.2px;background:#b8bcc2"></div>
<div class="a" style="left:814px;top:574.6px;width:9px;height:1.8px;background:#2f8cf0"></div>
<div class="a" style="left:817.2px;top:570.2px;width:10.4px;height:10.4px;border-radius:6px;background:#2f8cf0"></div>
<div class="a" style="left:829.6px;top:573.4px;width:4px;height:4px;border-radius:2px;background:#555a62"></div>
<span class="x" style="left: 933px; top: 567.9px; font-size: 13px; color: rgb(34, 38, 44); font-weight: bold; transform: scaleX(0.7923);">62%</span>
<!-- help -->
<div class="a" style="left:977.6px;top:555.4px;width:38.4px;height:38.4px;border-radius:20px;background:#c3d3e6"></div>
<div class="a" style="left:980px;top:557.8px;width:33.6px;height:33.6px;border-radius:17px;background:#2b394d"></div>
<span class="x" style="left: 992.8px; top: 565.2px; font-size: 18px; color: rgb(255, 255, 255); font-weight: bold; transform: scaleX(0.7273);">?</span>

</div>


</body></html>
